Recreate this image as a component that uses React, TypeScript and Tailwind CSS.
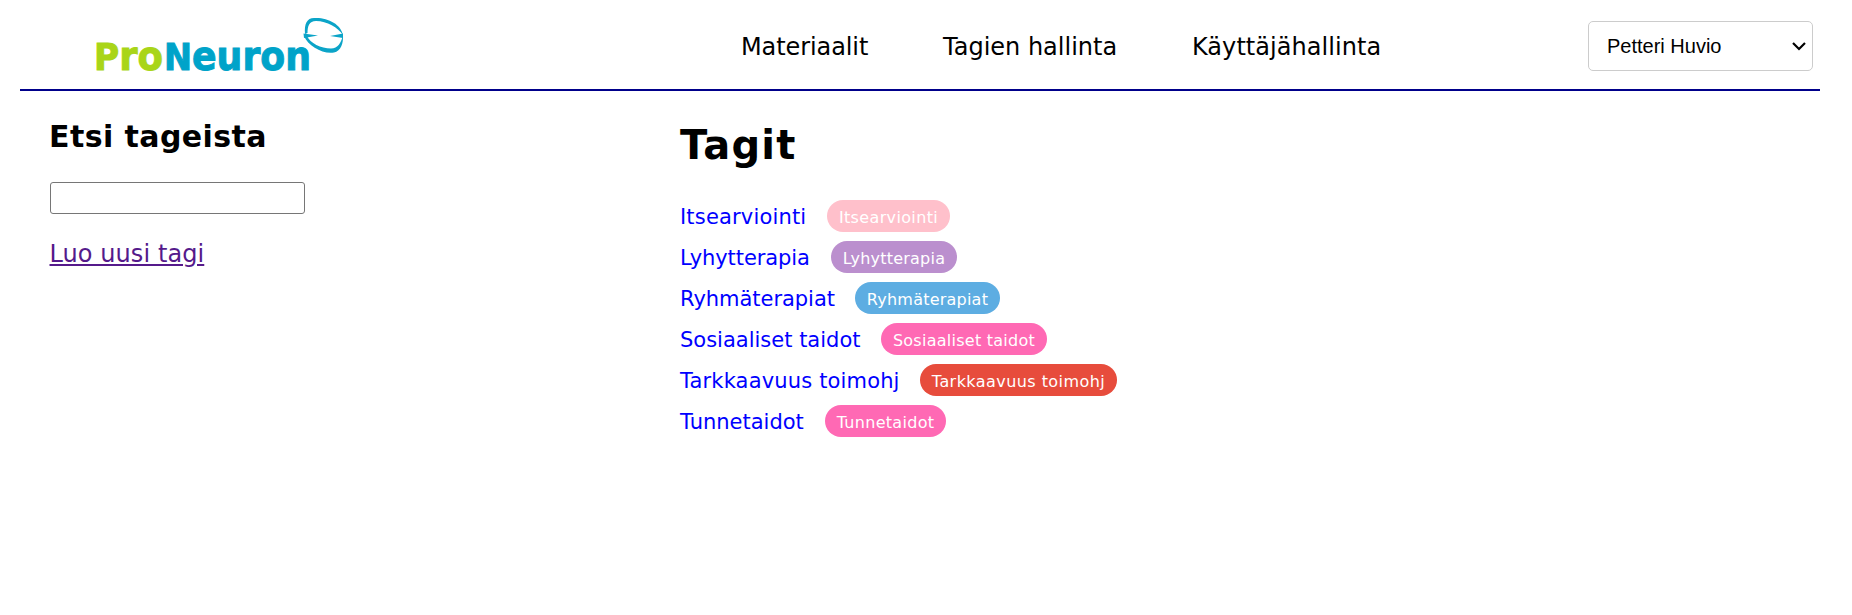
const tags = [
  { name: "Itsearviointi", link: "w-[127px] tracking-[0.17px]", pill: "w-[123px] bg-[#ffc0cb] tracking-[0.36px]" },
  { name: "Lyhytterapia", link: "w-[131px] tracking-[-0.08px]", pill: "w-[126px] bg-[#bb8fce] tracking-[0.22px]" },
  { name: "Ryhmäterapiat", link: "w-[155px] tracking-[-0.04px]", pill: "w-[145px] bg-[#5dade2] tracking-[0.22px]" },
  { name: "Sosiaaliset taidot", link: "w-[181px]", pill: "w-[166px] bg-[#ff69b4] tracking-[0.26px]" },
  { name: "Tarkkaavuus toimohj", link: "w-[220px] tracking-[0.16px]", pill: "w-[197px] bg-[#e74c3c] tracking-[0.44px]" },
  { name: "Tunnetaidot", link: "w-[125px]", pill: "w-[121px] bg-[#ff69b4] tracking-[0.3px]" },
];

function Logo() {
  return (
    <svg
      width="260"
      height="70"
      viewBox="90 15 260 70"
      className="ml-[70px] mt-[15px] shrink-0"
      fontFamily="'DejaVu Sans', sans-serif"
      fontWeight="700"
      fontSize="37"
    >
      <text x="94" y="69.5" textLength="69" lengthAdjust="spacingAndGlyphs" fill="#a9d518" stroke="#a9d518" strokeWidth="1">
        P<tspan fontSize="40">ro</tspan>
      </text>
      <text x="164" y="69.5" textLength="147" lengthAdjust="spacingAndGlyphs" fill="#00a3c9" stroke="#00a3c9" strokeWidth="1">
        N<tspan fontSize="40">euron</tspan>
      </text>
      <g fill="#0ba4c8">
        <path d="M305 34C304 24 307 18 314 18C327 17 341 24 343 35C338 27.500 327 21 316 21C309 21 307.500 26 307.500 33Z" />
        <path d="M304 36C308 46 323 54.500 334 52.500C341 51 343.500 43 343 35C341 43 338 48.500 331 48.500C321 48.500 310 43 307 36Z" />
        <path d="M303.500 33.500L318 35.500L304 38ZM343 33.500L330 36L343 38Z" />
      </g>
    </svg>
  );
}

export default function App() {
  return (
    <div className="min-h-[615px] w-full bg-white px-5 font-['DejaVu_Sans',sans-serif] text-black">
      <header className="flex h-[91px] w-[1800px] items-start border-b-2 border-[#00008b]">
        <Logo />
        <nav className="ml-[391px] flex h-[93px] items-center text-[24px]">
          <a className="w-[202px] tracking-[-0.1px]">Materiaalit</a>
          <a className="w-[249px]">Tagien hallinta</a>
          <a className="tracking-[0.05px]">Käyttäjähallinta</a>
        </nav>
        <div className="ml-auto mr-[7px] mt-[21px] flex h-[50px] w-[225px] items-center justify-between rounded-[5px] border border-[#ccc] pl-[18px] pr-[6px] font-['Liberation_Sans',sans-serif] text-[20px]">
          <span>Petteri Huvio</span>
          <svg width="14" height="9" viewBox="0 0 14 9" fill="none" stroke="#000" strokeWidth="2.2">
            <path d="M1 1L7 7L13 1" />
          </svg>
        </div>
      </header>
      <main className="flex pl-[30px]">
        <section className="w-[630px] pt-[26px]">
          <h2 className="ml-[-1px] text-[30px] font-bold leading-[40px] tracking-[0.42px]">Etsi tageista</h2>
          <input
            aria-label="Etsi tageista"
            className="mt-[25px] block h-8 w-[255px] rounded-[3px] border border-[#767676] px-1 outline-none"
          />
          <a className="ml-[-0.5px] mt-[25px] inline-block text-[24px] leading-[31px] tracking-[0.08px] text-[#551a8b] underline">
            Luo uusi tagi
          </a>
        </section>
        <section>
          <h1 className="mt-[29px] text-[40px] font-bold leading-[50px] tracking-[1.2px]">Tagit</h1>
          <ul className="mt-[30px] flex flex-col gap-[9px]">
            {tags.map((t) => (
              <li key={t.name} className="flex h-8 items-center gap-[20px] whitespace-nowrap">
                <a className={`${t.link} pt-[3px] text-[21px] text-[#0000ff]`}>{t.name}</a>
                <span className={`${t.pill} flex h-8 items-center justify-center rounded-full pt-[3px] text-[16px] text-white`}>
                  {t.name}
                </span>
              </li>
            ))}
          </ul>
        </section>
      </main>
    </div>
  );
}
